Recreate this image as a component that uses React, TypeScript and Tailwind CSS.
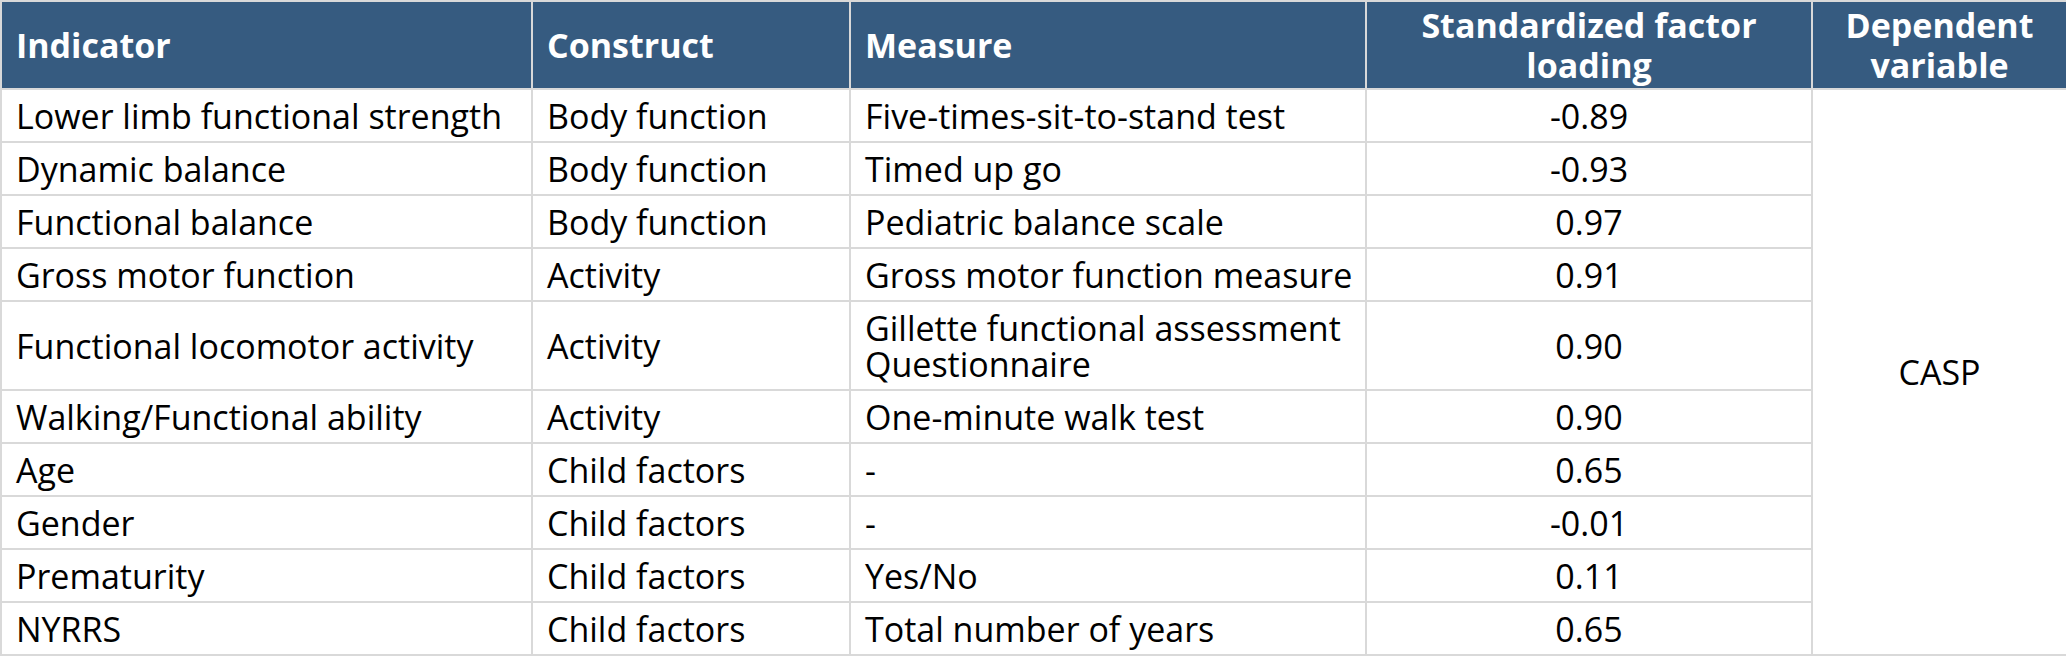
import React from "react";

const rows: [string, string, string, string][] = [
  ["Lower limb functional strength", "Body function", "Five-times-sit-to-stand test", "-0.89"],
  ["Dynamic balance", "Body function", "Timed up go", "-0.93"],
  ["Functional balance", "Body function", "Pediatric balance scale", "0.97"],
  ["Gross motor function", "Activity", "Gross motor function measure", "0.91"],
  ["Functional locomotor activity", "Activity", "Gillette functional assessment\nQuestionnaire", "0.90"],
  ["Walking/Functional ability", "Activity", "One-minute walk test", "0.90"],
  ["Age", "Child factors", "-", "0.65"],
  ["Gender", "Child factors", "-", "-0.01"],
  ["Prematurity", "Child factors", "Yes/No", "0.11"],
  ["NYRRS", "Child factors", "Total number of years", "0.65"],
];

export default function App() {
  return (
    <div className="w-[2066px] h-[656px] bg-white text-black" style={{ fontFamily: '"Open Sans", sans-serif' }}>
      <table className="w-[2066px] table-fixed border-collapse text-[34px] leading-[36px]">
        <colgroup>
          <col className="w-[531px]" />
          <col className="w-[318px]" />
          <col className="w-[516px]" />
          <col className="w-[446px]" />
          <col className="w-[255px]" />
        </colgroup>
        <thead>
          <tr className="h-[88px] bg-[#365b80] text-white font-bold leading-[40px]">
            <th className="border-2 border-[#d9d9d9] px-[14px] text-left align-middle">Indicator</th>
            <th className="border-2 border-[#d9d9d9] px-[14px] text-left align-middle">Construct</th>
            <th className="border-2 border-[#d9d9d9] px-[14px] text-left align-middle">Measure</th>
            <th className="border-2 border-[#d9d9d9] px-[4px] text-center align-middle">
              Standardized factor
              <br />
              loading
            </th>
            <th className="border-2 border-[#d9d9d9] px-[4px] text-center align-middle">
              Dependent
              <br />
              variable
            </th>
          </tr>
        </thead>
        <tbody>
          {rows.map((r, i) => {
            const double = r[2].includes("\n");
            return (
              <tr key={i} className={double ? "h-[89px]" : "h-[53px]"}>
                <td className="border-2 border-[#d9d9d9] px-[14px] py-0 align-middle whitespace-nowrap">{r[0]}</td>
                <td className="border-2 border-[#d9d9d9] px-[14px] py-0 align-middle whitespace-nowrap">{r[1]}</td>
                <td className="border-2 border-[#d9d9d9] pl-[14px] pr-[4px] py-0 align-middle whitespace-pre">{r[2]}</td>
                <td className="border-2 border-[#d9d9d9] px-[14px] py-0 align-middle text-center">{r[3]}</td>
                {i === 0 && (
                  <td rowSpan={rows.length} className="border-2 border-[#d9d9d9] align-middle text-center">
                    CASP
                  </td>
                )}
              </tr>
            );
          })}
        </tbody>
      </table>
    </div>
  );
}
